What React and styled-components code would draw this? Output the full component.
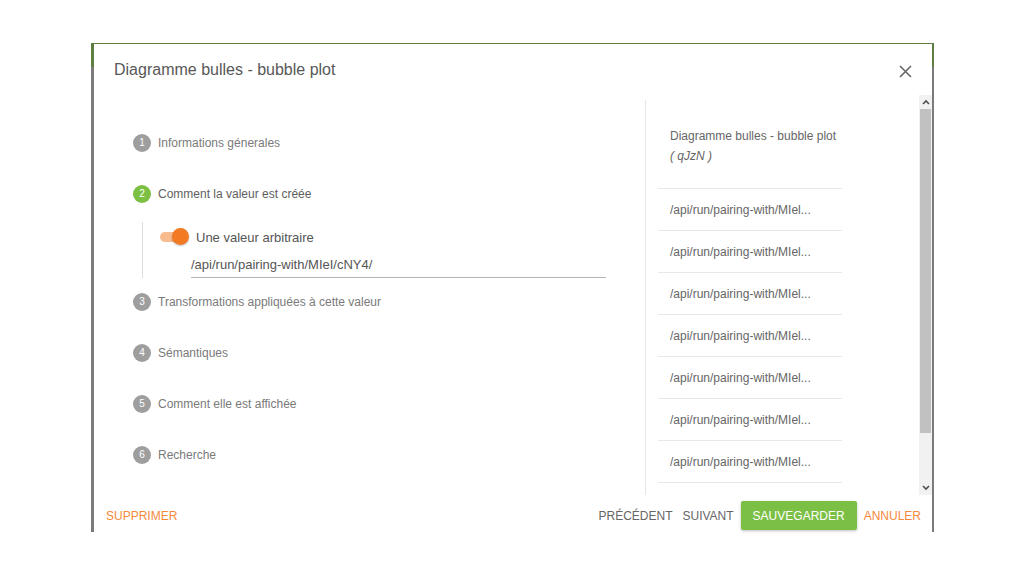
import styled, { createGlobalStyle } from 'styled-components'

const GlobalStyle = createGlobalStyle`
  html, body {
    margin: 0;
    padding: 0;
    background: #fff;
    font-family: "Liberation Sans", Arial, sans-serif;
  }
`

const Page = styled.div`
  width: 1024px;
  height: 576px;
  overflow: hidden;
  padding-top: 43px;
  box-sizing: border-box;
`

const Frame = styled.div`
  width: 843px;
  height: 489px;
  margin-left: 91px;
  box-sizing: border-box;
  padding: 1px 2px 0 3px;
  background: linear-gradient(to bottom, #5f7f42 0, #5f7f42 24px, #7b7b7b 24px);
  display: flex;
`

const Modal = styled.div`
  flex: 1;
  background: #fff;
  display: flex;
  flex-direction: column;
`

const Header = styled.div`
  height: 51px;
  display: flex;
  align-items: center;
  justify-content: space-between;
  padding: 0 20px;
  flex-shrink: 0;

  h2 {
    margin: 0;
    font-size: 16px;
    font-weight: 400;
    color: #585858;
  }
`

const Close = styled.button`
  border: 0;
  background: none;
  padding: 0;
  width: 14px;
  height: 14px;
  display: flex;
  align-items: center;
  justify-content: center;
  margin-top: 3px;
`

const Body = styled.div`
  height: 400px;
  display: flex;
  flex-shrink: 0;
`

const StepsColumn = styled.div`
  width: 551px;
  padding: 22px 39px 0;
  box-sizing: border-box;
`

const StepHeader = styled.div`
  height: 51px;
  display: flex;
  align-items: center;
  gap: 7px;
  font-size: 12px;
  color: ${p => (p.$active ? '#5e5e5e' : '#7a7a7a')};
`

const Bullet = styled.span`
  width: 18px;
  height: 18px;
  border-radius: 50%;
  background: ${p => (p.$active ? '#7cc043' : '#9e9e9e')};
  color: #fff;
  font-size: 10px;
  display: flex;
  align-items: center;
  justify-content: center;
`

const StepContent = styled.div`
  margin: 3px 0 -2px 9px;
  height: 56px;
  border-left: 1px solid #dcdcdc;
  padding-left: 17px;
  box-sizing: border-box;
`

const ToggleRow = styled.div`
  height: 30px;
  display: flex;
  align-items: center;
  gap: 9px;
  font-size: 13px;
  color: #555;
`

const Switch = styled.span`
  position: relative;
  width: 27px;
  height: 10px;
  border-radius: 5px;
  background: #f7bb8d;

  &::after {
    content: '';
    position: absolute;
    right: -2px;
    top: -4px;
    width: 17px;
    height: 17px;
    border-radius: 50%;
    background: #f27a22;
    box-shadow: 0 1px 2px rgba(0, 0, 0, 0.25);
  }
`

const PathInput = styled.div`
  margin-left: 31px;
  width: 415px;
  height: 26px;
  display: flex;
  align-items: center;
  border-bottom: 1px solid #b5b5b5;
  font-size: 13px;
  color: #555;
  box-sizing: border-box;
`

const Side = styled.div`
  width: 274px;
  border-left: 1px solid #e6e6e6;
  margin-top: 5px;
  padding-left: 12px;
  box-sizing: border-box;
  overflow: hidden;
`

const Item = styled.div`
  width: 184px;
  padding: ${p => (p.$head ? '26px 12px 22px' : '11px 12px 10px')};
  border-bottom: 1px solid #e8e8e8;
  font-size: 12px;
  line-height: 20px;
  color: #666;
  box-sizing: border-box;
  white-space: nowrap;

  em {
    display: block;
    font-style: italic;
  }
`

const Scrollbar = styled.div`
  width: 13px;
  background: #f1f1f1;
  display: flex;
  flex-direction: column;
`

const Arrow = styled.div`
  height: 14px;
  display: flex;
  align-items: center;
  justify-content: center;
`

const Track = styled.div`
  flex: 1;
`

const Thumb = styled.div`
  height: 324px;
  margin: 0 1px;
  background: #c1c1c1;
`

const Footer = styled.div`
  height: 37px;
  display: flex;
  align-items: center;
  padding: 4px 6px 0 7px;
  box-sizing: border-box;
`

const TextButton = styled.button`
  border: 0;
  background: none;
  padding: 0 5px;
  height: 29px;
  font-family: inherit;
  font-size: 12px;
  text-transform: uppercase;
  color: ${p => (p.$accent ? '#f5893a' : '#666')};
`

const SaveButton = styled.button`
  border: 0;
  border-radius: 2px;
  height: 29px;
  padding: 0 12px;
  margin: 0 2px;
  background: #7cbf45;
  color: #fff;
  font-family: inherit;
  font-size: 12px;
  box-shadow: 0 1px 3px rgba(0, 0, 0, 0.25);
`

const Spacer = styled.div`
  flex: 1;
`

const steps = [
  'Informations génerales',
  'Comment la valeur est créée',
  'Transformations appliquées à cette valeur',
  'Sémantiques',
  'Comment elle est affichée',
  'Recherche',
]

const Chevron = ({ up }) => (
  <svg width="8" height="6" viewBox="0 0 8 6">
    <path d={up ? 'M1 5 L4 2 L7 5' : 'M1 1 L4 4 L7 1'} fill="none" stroke="#505050" strokeWidth="1.6" />
  </svg>
)

export default function App () {
  return (
    <Page>
      <GlobalStyle />
      <Frame>
        <Modal>
          <Header>
            <h2>Diagramme bulles - bubble plot</h2>
            <Close>
              <svg width="13" height="13" viewBox="0 0 13 13">
                <path d="M1 1 L12 12 M12 1 L1 12" stroke="#666" strokeWidth="1.6" />
              </svg>
            </Close>
          </Header>
          <Body>
            <StepsColumn>
              {steps.map((s, i) => (
                <div key={s}>
                  <StepHeader $active={i === 1}>
                    <Bullet $active={i === 1}>{i + 1}</Bullet>
                    {s}
                  </StepHeader>
                  {i === 1 && (
                    <StepContent>
                      <ToggleRow>
                        <Switch />
                        Une valeur arbitraire
                      </ToggleRow>
                      <PathInput>/api/run/pairing-with/MIeI/cNY4/</PathInput>
                    </StepContent>
                  )}
                </div>
              ))}
            </StepsColumn>
            <Side>
              <Item $head>
                Diagramme bulles - bubble plot
                <em>( qJzN )</em>
              </Item>
              {Array.from({ length: 9 }).map((_, i) => (
                <Item key={i}>/api/run/pairing-with/MIel...</Item>
              ))}
            </Side>
            <Scrollbar>
              <Arrow><Chevron up /></Arrow>
              <Track><Thumb /></Track>
              <Arrow><Chevron /></Arrow>
            </Scrollbar>
          </Body>
          <Footer>
            <TextButton $accent>Supprimer</TextButton>
            <Spacer />
            <TextButton>Précédent</TextButton>
            <TextButton>Suivant</TextButton>
            <SaveButton>SAUVEGARDER</SaveButton>
            <TextButton $accent>Annuler</TextButton>
          </Footer>
        </Modal>
      </Frame>
    </Page>
  )
}
